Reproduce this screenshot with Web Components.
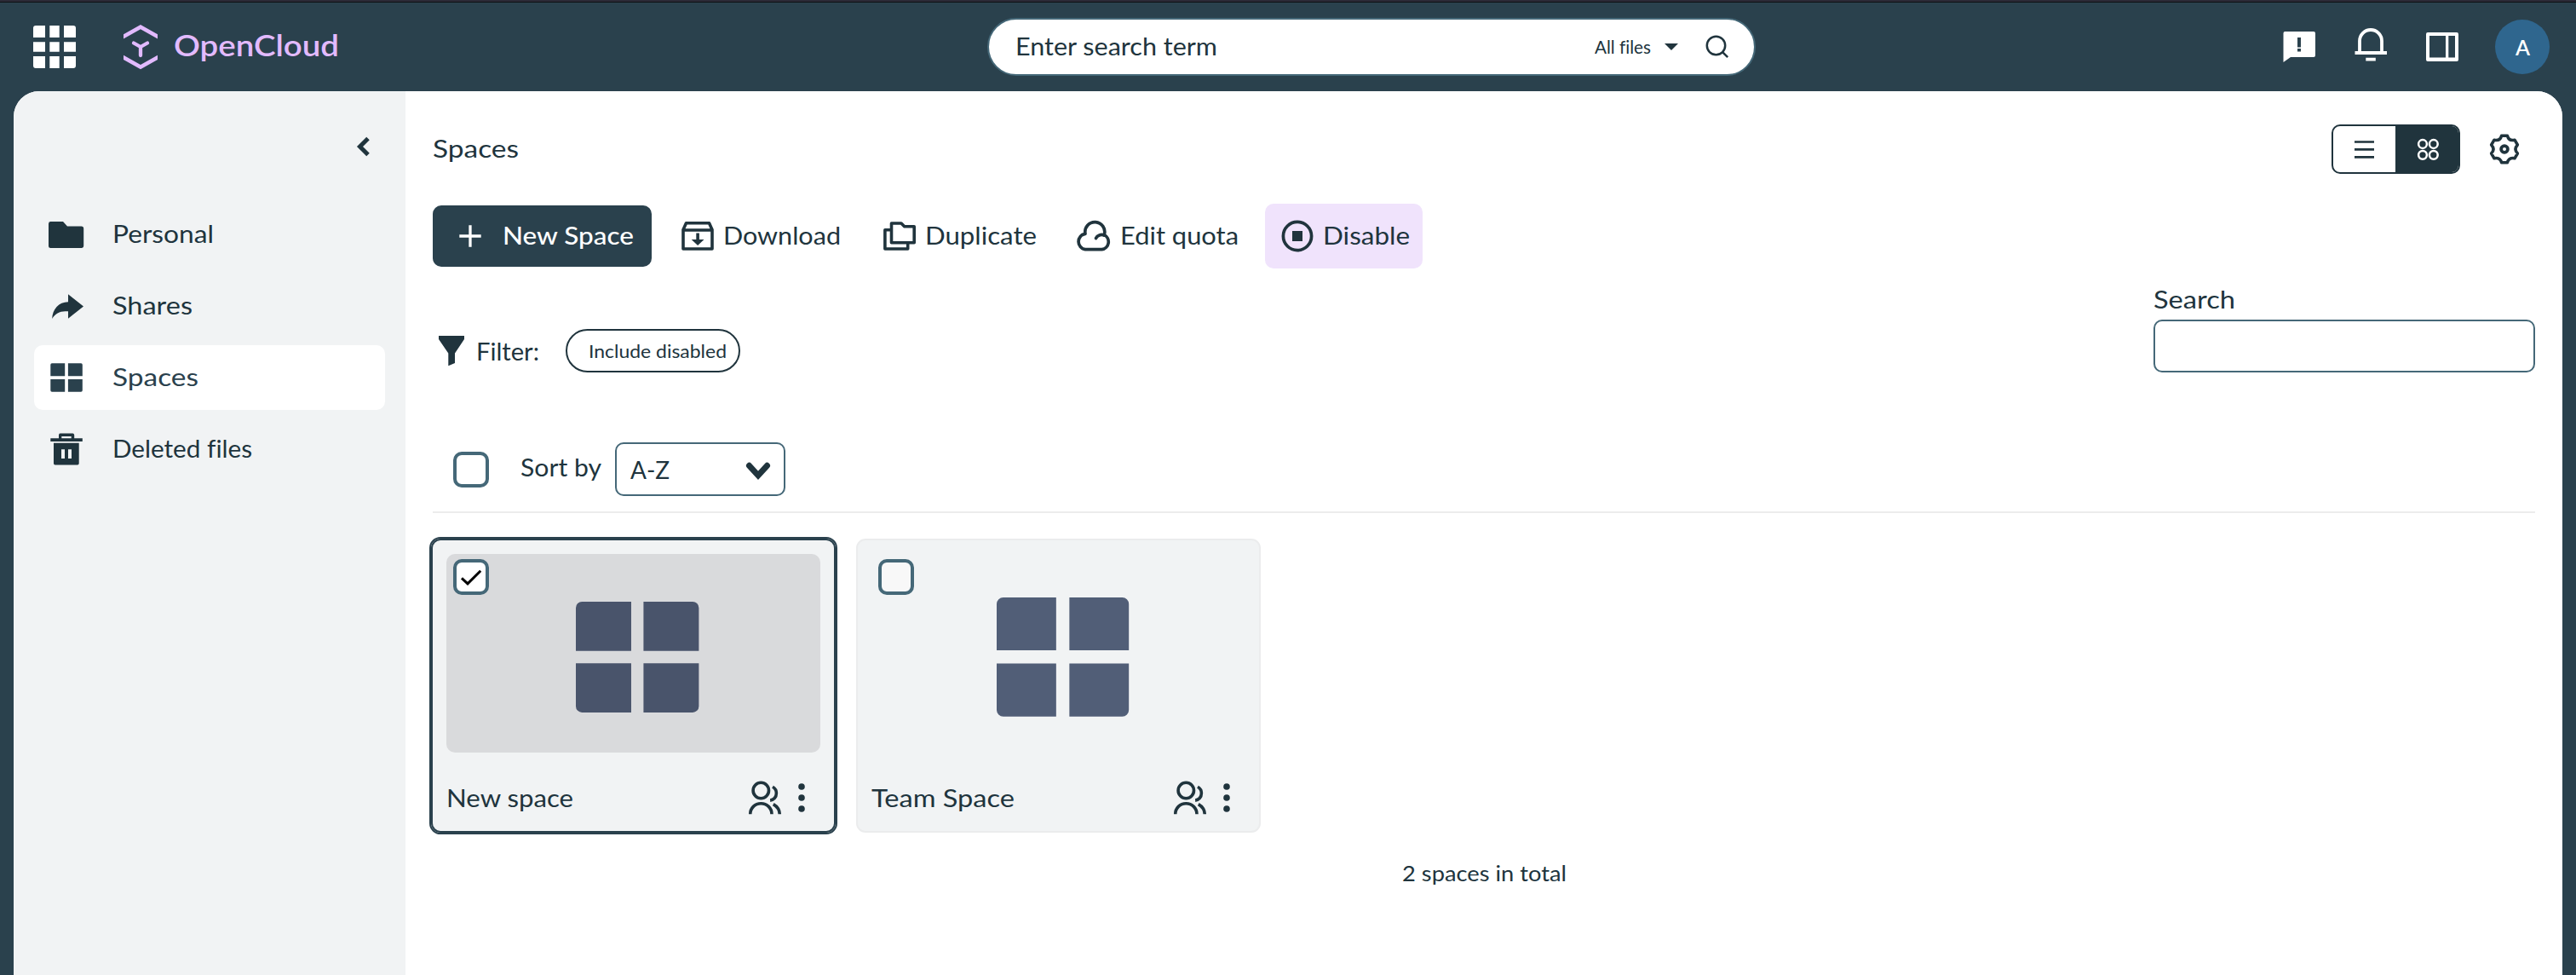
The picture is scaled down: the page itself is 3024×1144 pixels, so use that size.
<!DOCTYPE html>
<html lang="en">
<head>
<meta charset="utf-8">
<title>Spaces - OpenCloud</title>
<style>
html,body{margin:0;height:100%}
body{overflow:hidden;font-family:Lato,"Open Sans",sans-serif;color:#20343d;background:#2a414d}
</style>
</head>
<body>
<oc-app></oc-app>
<script>
const ICONS = {
  apps: ['39 30 50 50', '<g fill="#fff"><path d="M42 30h11v14H39V33a3 3 0 0 1 3-3zM58.3 30h11.4v14H58.3zM75 30h11a3 3 0 0 1 3 3v11H75zM39 49.3h14v11.4H39zM58.3 49.3h11.4v11.4H58.3zM75 49.3h14v11.4H75zM39 66h14v14H42a3 3 0 0 1-3-3zM58.3 66h11.4v14H58.3zM75 66h14v11a3 3 0 0 1-3 3H75z"/></g>'],
  logo: ['145 29 40 52', '<g fill="#e2baff"><path d="M145 40.2 165 29l20 11.200v5.200L165 34.200l-20 11.200zM145 64.800l20 11.200 20-11.200v5.200L165 81.200l-20-11.200z"/><path d="M157 50.500l8 4.500 8-4.500M165 55v10" fill="none" stroke="#e2baff" stroke-width="4.300" stroke-linecap="round" stroke-linejoin="round"/></g>'],
  caret: ['1954 52 16 8', '<path d="M1954 52h16l-8 8z"/>'],
  search: ['2002 41 28 28', '<g fill="none" stroke="currentColor" stroke-width="2.500"><circle cx="2014.500" cy="53.500" r="10.700"/><path d="M2021.800 60.800l6.400 6.400"/></g>'],
  feedback: ['2680 38 38 36', '<path fill="#fff" fill-rule="evenodd" d="M2682 38h34a2 2 0 0 1 2 2v26a2 2 0 0 1-2 2h-27l-8.500 6V40a2 2 0 0 1 1.500-2zM2697 45v11.500h4V45zM2697 58v3.500h4V58z"/>'],
  bell: ['2764 32 38 40', '<g fill="none" stroke="#fff" stroke-width="3.800"><path d="M2770 62V48a13 13 0 0 1 26 0v14M2764.500 62h37.500M2777.300 69.600h11.500"/></g>'],
  panel: ['2848 38 38 34', '<path fill="#fff" fill-rule="evenodd" d="M2850 38h34a2 2 0 0 1 2 2v30a2 2 0 0 1-2 2h-34a2 2 0 0 1-2-2V40a2 2 0 0 1 2-2zM2852 42v25.500h19V42zM2874.300 42v25.500h7.700V42z"/>'],
  back: ['418 160 16 24', '<path d="M432 162.500l-9.500 9.500 9.500 9.500" fill="none" stroke="currentColor" stroke-width="5"/>'],
  folder: ['57 258 41 31', '<path d="M59.500 258h14.500l5 5.500h16.500a2.700 2.700 0 0 1 2.700 2.700v20a2.700 2.700 0 0 1-2.700 2.700h-36a2.500 2.500 0 0 1-2.500-2.500v-26a2.500 2.500 0 0 1 2.500-2.400z"/>'],
  share: ['57 341.500 41 31', '<path d="M80 362.700h-3.500c-6.500 0-12 3.400-15.300 8.700.3-11 7.800-19.700 18.800-19.700v-9L98 357l-18 14.300z"/>'],
  grid: ['57 426 41 34', '<path fill="#2a414d" d="M61 426.300h15.200v14.900H59.300V428a1.700 1.700 0 0 1 1.700-1.700zM79.900 426.300h15.200a1.700 1.700 0 0 1 1.700 1.700v13.200H79.900zM59.300 444.900h16.900v14.900H61a1.700 1.700 0 0 1-1.700-1.700zM79.900 444.900h16.900v13.200a1.700 1.700 0 0 1-1.700 1.700H79.900z"/>'],
  trash: ['57 508 41 38', '<path fill-rule="evenodd" d="M71 508.600h14.500a2 2 0 0 1 1.700 2v3.700h9.600v3.700H59.300v-3.700h9.700v-3.700a2 2 0 0 1 2-2zM72.300 512v2.300h11.400V512zM63 519.800h29.700v23.900a1.700 1.700 0 0 1-1.700 1.700H64.700a1.700 1.700 0 0 1-1.700-1.700zM72 527.200v10.700h4v-10.700zM80 527.200v10.700h4v-10.700z"/>'],
  list: ['2763 164 24 22', '<path d="M2763 166.500h23M2763 175.300h23M2763 184.300h23" stroke="currentColor" stroke-width="2.700"/>'],
  dots: ['2838 163 25 25', '<g fill="none" stroke="#fff" stroke-width="2.500"><circle cx="2844" cy="169" r="4.900"/><circle cx="2856.800" cy="169" r="4.900"/><circle cx="2844" cy="181.800" r="4.900"/><circle cx="2856.800" cy="181.800" r="4.900"/></g>'],
  gear: ['-18 -18 36 36', '<g fill="none" stroke="currentColor" stroke-width="3.500" stroke-linejoin="round"><path d="M-3.400-15.800H3.400Q5.200-9.100 12-10.800L15.400-5Q10.500 0 15.400 5L12 10.800Q5.200 9.100 3.400 15.800H-3.400Q-5.200 9.100-12 10.800L-15.400 5Q-10.500 0-15.400-5L-12-10.800Q-5.200-9.100-3.400-15.800z"/><circle r="3.900" stroke-width="3.800"/></g>'],
  plus: ['539 264 26 26', '<path d="M552 264.300v25.400M539.300 277h25.400" stroke="#fff" stroke-width="3.300"/>'],
  download: ['800 259 38 36', '<path d="M802 269.500l3.500-7.700h27l3.500 7.700V292h-34zM802 270h34" fill="none" stroke="currentColor" stroke-width="3.600" stroke-linejoin="round"/><path d="M817.300 273.500h3.600v7.500h5.600l-7.400 7-7.400-7h5.600z"/>'],
  duplicate: ['1037 259 38 36', '<g fill="none" stroke="currentColor" stroke-width="3.600" stroke-linejoin="round"><path d="M1046.500 262h11.500l3.700 3.700h11.500v19h-26.700z"/><path d="M1046.500 269.700h-7.600V292h26.800v-7"/></g>'],
  cloud: ['1264 258 42 37', '<g fill="none" stroke="currentColor" stroke-width="3.700" stroke-linecap="round"><path d="M1274 273.300a11.500 11.500 0 1 1 22.200 1.400a9 9 0 0 1-2.700 17h-19.500a9.300 9.300 0 0 1 0-18.400z" stroke-linejoin="round"/><path d="M1286.500 278.500c1.500-3.500 6-5 10-3.300"/></g>'],
  stop: ['1504 258 38 38', '<circle cx="1523" cy="277" r="16.600" fill="none" stroke="currentColor" stroke-width="3.700"/><path d="M1517 271h12v12h-12z"/>'],
  funnel: ['515 395 30 35', '<path d="M515 395h30v4l-11 16.500V427l-7.700 3.300v-14.800L515 399z"/>'],
  chevron: ['876 543 29 24', '<path d="M879.500 548.300l10.500 11.500 10.500-11.500" fill="none" stroke="currentColor" stroke-width="7" stroke-linecap="round"/>'],
  check: ['541 667 24 19', '<path d="M542 677.300l7 6.500 15.200-15" fill="none" stroke="#000" stroke-width="3"/>'],
  people: ['878 916 40 40', '<g fill="none" stroke="currentColor" stroke-width="3.600"><circle cx="893.300" cy="927.500" r="9.200"/><path d="M880.700 955.300c0-7 5.500-12.600 12.600-12.600s12.700 5.600 12.700 12.600M907 923.300c2.300 1.300 4.400 4.200 4.400 7.500 0 4.600-3.200 8-7.300 8.300M907.800 943.600c4.500 2.600 7.300 6.400 7.500 11.700"/></g>'],
  more: ['937 920 8 34', '<circle cx="941" cy="924" r="3.800"/><circle cx="941" cy="937" r="3.800"/><circle cx="941" cy="950" r="3.800"/>'],
  tiles: ['2 3 20 18', '<path d="M3 3H11V11H2V4A1 1 0 0 1 3 3zM13 3H21A1 1 0 0 1 22 4V11H13zM2 13H11V21H3A1 1 0 0 1 2 20zM13 13H22V20A1 1 0 0 1 21 21H13z"/>']
};

const define = (name, html) => customElements.define(name, class extends HTMLElement {
  connectedCallback() {
    if (this.shadowRoot) return;
    this.attachShadow({mode: 'open'}).innerHTML = typeof html === 'function' ? html(this) : html;
  }
});

define('oc-icon', el => {
  const [box, art] = ICONS[el.getAttribute('name')];
  const [, , w, h] = box.split(' ');
  const k = +(el.getAttribute('scale') || 1);
  return `<style>:host{display:block;flex:none;width:${w * k}px;height:${h * k}px}svg{display:block;overflow:visible}</style>
  <svg width="${w * k}" height="${h * k}" viewBox="${box}" fill="currentColor">${art}</svg>`;
});

define('oc-checkbox', el => `<style>
:host{display:block;flex:none;width:42px;height:42px}
div{box-sizing:border-box;width:42px;height:42px;border:4px solid #456878;border-radius:10px;background:${el.hasAttribute('dim') ? '#f8f8f8' : '#fff'};display:flex;align-items:center;justify-content:center}
</style><div>${el.hasAttribute('checked') ? '<oc-icon name="check"></oc-icon>' : ''}</div>`);

define('oc-topbar', `<style>
:host{display:flex;flex:none;box-sizing:border-box;height:107px;border-top:2px solid #2c2a37;align-items:center;padding:1px 31px 0 39px;box-shadow:inset 0 1px 0 #0d1013}
.brand{display:flex;align-items:center;gap:19px;margin-left:56px;width:253px;color:#e2baff}
.search{box-sizing:border-box;width:902px;height:68px;margin-left:761px;border:2px solid #456878;border-radius:34px;background:#fff;display:flex;align-items:center;padding:0 29px 0 31px}
.scope{display:flex;align-items:center;gap:16px;margin-left:auto;margin-right:32px}
.tools{display:flex;align-items:center;margin-left:auto}
.avatar{width:64px;height:64px;border-radius:50%;background:#2f668e;color:#fff;display:flex;align-items:center;justify-content:center;margin-left:43px}
</style>
<oc-icon name="apps"></oc-icon>
<div class="brand"><oc-icon name="logo"></oc-icon><oc-text size="34.500" w="194" weight="600" up="2">OpenCloud</oc-text></div>
<div class="search"><oc-text w="237" up="1">Enter search term</oc-text>
<div class="scope"><oc-text size="20.500" w="66">All files</oc-text><oc-icon name="caret"></oc-icon></div><oc-icon name="search"></oc-icon></div>
<div class="tools">
<oc-icon name="feedback"></oc-icon><oc-icon name="bell" style="margin:-6px 46px 0"></oc-icon><oc-icon name="panel"></oc-icon>
<div class="avatar"><oc-text size="25" w="17" weight="600">A</oc-text></div></div>`);

define('oc-nav-item', el => `<style>
:host{display:flex;align-items:center;height:76px;padding-left:17px;border-radius:10px;gap:34px}
:host([active]){background:#fff;color:#2a414d}
</style><oc-icon name="${el.getAttribute('icon')}"></oc-icon><slot></slot>`);

define('oc-sidebar', `<style>
:host{display:block;box-sizing:border-box;flex:none;width:460px;background:#f1f3f4;padding:53px 24px 0}
.top{display:flex;justify-content:flex-end;padding-right:18px;height:24px}
nav{display:flex;flex-direction:column;gap:8px;margin-top:53px}
</style>
<div class="top"><oc-icon name="back"></oc-icon></div>
<nav>
<oc-nav-item icon="folder"><oc-text w="119" up="1">Personal</oc-text></oc-nav-item>
<oc-nav-item icon="share"><oc-text w="94" up="1">Shares</oc-text></oc-nav-item>
<oc-nav-item icon="grid" active><oc-text w="101" up="1">Spaces</oc-text></oc-nav-item>
<oc-nav-item icon="trash"><oc-text w="164" up="1">Deleted files</oc-text></oc-nav-item>
</nav>`);

define('oc-action', el => `<style>
:host{display:flex;box-sizing:border-box;align-items:center;height:76px;border-radius:10px;gap:11px}
:host([primary]){height:72px;width:257px;background:#2a414d;color:#fff;gap:25px;padding-left:31px}
:host([hover]){background:#f0e3fc;width:185px;padding-left:19px}
</style><oc-icon name="${el.getAttribute('icon')}"></oc-icon><slot></slot>`);

define('oc-space-card', el => {
  const on = el.hasAttribute('selected');
  return `<style>
:host{display:flex;flex-direction:column;box-sizing:border-box;position:relative;width:475px;height:345px;border:2px solid ${on ? '#2a414d' : '#ebeced'};border-radius:11px;background:#f1f3f4;padding:16px;${on ? 'outline:2px solid #2a414d;' : ''}}
oc-checkbox{position:absolute;left:24px;top:22px}
.preview{box-sizing:border-box;height:233px;border-radius:10px;background:${on ? '#d9dadc' : 'none'};color:${on ? '#49546b' : '#515e77'};display:flex;align-items:center;justify-content:center;padding:8px 0 0 ${on ? 9 : 11}px}
footer{flex:1;display:flex;align-items:center;padding:30px 18px 0 0}
oc-icon[name=people]{margin:0 19px 0 auto}
</style>
<div class="preview"><oc-icon name="tiles" scale="${on ? 7.22 : 7.76}"></oc-icon></div>
<oc-checkbox ${on ? 'checked' : 'dim'}></oc-checkbox>
<footer><slot></slot><oc-icon name="people"></oc-icon><oc-icon name="more"></oc-icon></footer>`;
});

define('oc-spaces', `<style>
:host{display:flex;flex-direction:column;flex:1;background:#fff;padding:39px 32px 0}
.head,.actions,.filters,.sort,.left,.switch,.chip,.cards,.select,.switch div{display:flex;align-items:center}
.head{height:58px}
.switch{box-sizing:border-box;width:151px;height:58px;margin-left:auto;margin-right:34px;border:2px solid #20343d;border-radius:10px;overflow:hidden}
.switch div{box-sizing:border-box;flex:none;height:100%;justify-content:center;width:73px}
.switch .on{background:#20343d;width:74px;padding-left:3px}
.gear{margin-right:18px}
.actions{height:76px;margin-top:35px}
.filters{height:122px;align-items:flex-end;justify-content:space-between}
.left{height:51px;padding-left:7px}
.chip{box-sizing:border-box;width:205px;height:51px;border:2px solid #20343d;border-radius:26px;margin-left:31px;padding-left:25px}
.field{display:flex;flex-direction:column;gap:6px;width:448px}
.box{box-sizing:border-box;height:62px;border:2px solid #456878;border-radius:10px}
.sort{height:63px;margin-top:82px;padding-left:24px}
.select{box-sizing:border-box;width:200px;height:63px;border:2px solid #456878;border-radius:10px;justify-content:space-between;padding:4px 15px 0 16px;margin-left:16px}
hr{width:100%;height:2px;margin:18px 0 30px;border:0;background:#ececec}
.cards{gap:24px;margin-left:-2px}
.total{display:flex;justify-content:center;margin-top:30px}
</style>
<div class="head"><oc-text w="101" up="1">Spaces</oc-text>
<div class="switch"><div><oc-icon name="list"></oc-icon></div><div class="on"><oc-icon name="dots"></oc-icon></div></div>
<oc-icon class="gear" name="gear"></oc-icon></div>
<div class="actions">
<oc-action primary icon="plus"><oc-text w="154" up="1" weight="500">New Space</oc-text></oc-action>
<oc-action icon="download" style="margin-left:35px"><oc-text w="138" up="1">Download</oc-text></oc-action>
<oc-action icon="duplicate" style="margin-left:50px"><oc-text w="131" up="1">Duplicate</oc-text></oc-action>
<oc-action icon="cloud" style="margin-left:47px;gap:9px"><oc-text w="139" up="1">Edit quota</oc-text></oc-action>
<oc-action hover icon="stop" style="margin-left:31px"><oc-text w="102" up="1">Disable</oc-text></oc-action>
</div>
<div class="filters">
<div class="left"><oc-icon name="funnel"></oc-icon><oc-text w="74" style="margin-left:14px">Filter:</oc-text>
<div class="chip"><oc-text size="20.500" w="162">Include disabled</oc-text></div></div>
<div class="field"><oc-text w="96">Search</oc-text><div class="box"></div></div>
</div>
<div class="sort"><oc-checkbox></oc-checkbox><oc-text w="95" up="3" style="margin-left:37px">Sort by</oc-text>
<div class="select"><oc-text w="46" up="2">A-Z</oc-text><oc-icon name="chevron"></oc-icon></div></div>
<hr>
<div class="cards">
<oc-space-card selected><oc-text w="149">New space</oc-text></oc-space-card>
<oc-space-card><oc-text w="168">Team Space</oc-text></oc-space-card>
</div>
<div class="total"><oc-text size="24.500" w="193">2 spaces in total</oc-text></div>`);

define('oc-app', `<style>
:host{display:flex;flex-direction:column;height:100vh;background:#2a414d}
.panel{flex:1;display:flex;margin:0 16px;border-radius:30px 30px 0 0;overflow:hidden;background:#fff}
</style>
<oc-topbar></oc-topbar><div class="panel"><oc-sidebar></oc-sidebar><oc-spaces></oc-spaces></div>`);

/* One line of text whose letters are widened to fill the width given by "w". */
customElements.define('oc-text', class extends HTMLElement {
  connectedCallback() {
    if (this.shadowRoot) return;
    const size = +(this.getAttribute('size') || 28.5);
    const w = +this.getAttribute('w');
    this.attachShadow({mode: 'open'}).innerHTML = `<style>
:host{display:block;flex:none;width:${w}px;white-space:nowrap;font-size:${size}px;line-height:36px;font-weight:${this.getAttribute('weight') || 400};padding-bottom:${2 * (this.getAttribute('up') || 0)}px}
span{display:inline-block;transform-origin:0 50%;font-variant-ligatures:none}</style><span><slot></slot></span>`;
    const span = this.shadowRoot.querySelector('span');
    span.style.transform = `scaleX(${(w / span.getBoundingClientRect().width).toFixed(4)})`;
  }
});
</script>
</body>
</html>
